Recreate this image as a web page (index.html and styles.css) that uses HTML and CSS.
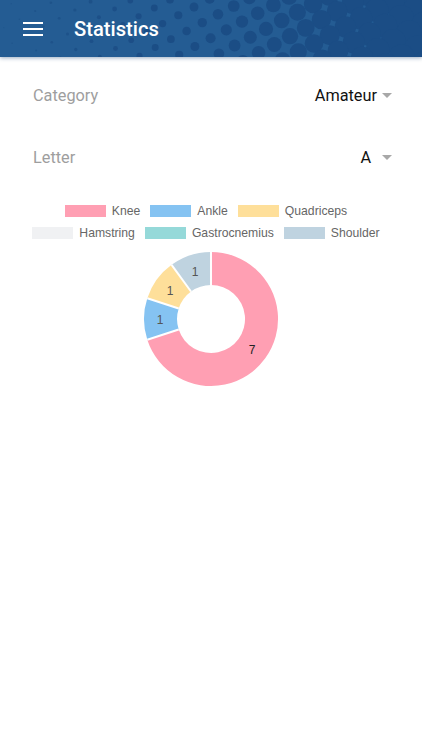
FILE: index.html
```html
<!DOCTYPE html>
<html lang="en">
<head>
	<meta charset="UTF-8">
	<title>Statistics</title>
	<link rel="stylesheet" href="styles.css">
</head>
<body>
	<div class="top">
		<svg class="dots" id="dots" width="422" height="57" viewBox="0 0 422 57"></svg>
		<svg class="menu_icon" width="20" height="14" viewBox="0 0 20 14">
			<rect x="0" y="0" width="20" height="2" fill="#fff"/>
			<rect x="0" y="6" width="20" height="2" fill="#fff"/>
			<rect x="0" y="12" width="20" height="2" fill="#fff"/>
		</svg>
		<p class="title">Statistics</p>
	</div>
	<div class="main">
		<div class="row">
			<p class="label">Category</p>
			<p class="value">Amateur<span class="arrow"></span></p>
		</div>
		<div class="row letter_row">
			<p class="label">Letter</p>
			<p class="value">A<span class="arrow arrow_wide"></span></p>
		</div>
	</div>
	<div class="legend">
		<ul>
			<li><i class="c_knee"></i>Knee</li>
			<li><i class="c_ankle"></i>Ankle</li>
			<li><i class="c_quad"></i>Quadriceps</li>
		</ul>
		<ul>
			<li><i class="c_ham"></i>Hamstring</li>
			<li><i class="c_gas"></i>Gastrocnemius</li>
			<li><i class="c_sho"></i>Shoulder</li>
		</ul>
	</div>
	<svg class="donut" width="136" height="136" viewBox="143 252 136 136">
		<path d="M211 253A67 67 0 1 1 147.3 340.7L178.7 330.5A34 34 0 1 0 211 286Z" fill="#ff9fb3"/>
		<path d="M147.3 340.7A67 67 0 0 1 147.3 299.3L178.7 309.5A34 34 0 0 0 178.7 330.5Z" fill="#85c3f2"/>
		<path d="M147.3 299.3A67 67 0 0 1 171.6 265.8L191 292.5A34 34 0 0 0 178.7 309.5Z" fill="#fedf9a"/>
		<path d="M171.6 265.8A67 67 0 0 1 211 253L211 286A34 34 0 0 0 191 292.5Z" fill="#bfd3e0"/>
		<g class="seams">
			<path d="M211 253V286M147.3 340.7L178.7 330.5M147.3 299.3L178.7 309.5M171.6 265.8L191 292.5"/>
		</g>
		<text x="252" y="355" class="num num_dark">7</text>
		<text x="160" y="325" class="num">1</text>
		<text x="170" y="296" class="num">1</text>
		<text x="195" y="277" class="num">1</text>
	</svg>
	<script src="dots.js"></script>
</body>
</html>
```

FILE: styles.css
```css
html,body{margin: 0; padding: 0; background: #fff;}
body{font-family: Roboto,"Liberation Sans",sans-serif;}
p,ul,li{margin: 0; padding: 0;}

.top{position: relative;display: flex;align-items: center;height: 57px;background: #245c93;box-shadow: 0 1px 4px rgba(30,70,120,.45);overflow: hidden;}
.dots{position: absolute;top: 0;left: 0;filter: blur(.6px);}
.menu_icon{position: relative;margin-left: 23px;}
.title{position: relative;margin-left: 31px;font-size: 20.2px;font-weight: 500;color: #fff;}

.main{padding: 0 30px 0 33px;}
.row{display: flex;justify-content: space-between;align-items: center;height: 24px;margin-top: 26px;}
.letter_row{margin-top: 38px;}
.label{font-size: 16.3px;color: #9e9e9e;}
.value{display: flex;align-items: center;font-size: 16.3px;color: #111;}
.arrow{width: 0;height: 0;margin-left: 5px;border-style: solid;border-width: 5px 5px 0;border-color: #a8a8a8 transparent transparent;}
.arrow_wide{margin-left: 11px;}

.legend{margin-top: 31px;padding-right: 10px;font-family: "Liberation Sans",Arial,sans-serif;font-size: 12.2px;color: #666;}
.legend ul{display: flex;justify-content: center;gap: 10px;height: 22px;}
.legend li{display: flex;align-items: center;list-style: none;gap: 6px;}
.legend i{display: block;width: 41px;height: 12px;}
.c_knee{background: #ff9fb3;}
.c_ankle{background: #85c3f2;}
.c_quad{background: #fedf9a;}
.c_ham{background: #f0f1f3;}
.c_gas{background: #95d9d9;}
.c_sho{background: #bfd3e0;}

.donut{display: block;margin: 7px 0 0 143px;}
.seams path{fill: none;stroke: #fff;stroke-width: 2;}
.num{font-family: "Liberation Sans",Arial,sans-serif;font-size: 12px;fill: #555;text-anchor: middle;}
.num_dark{fill: #222;}
```

FILE: dots.js
```js
var svg = document.getElementById("dots");
var ns = "http://www.w3.org/2000/svg";
var stops = [[0, .5], [100, 2], [200, 4.6], [270, 7.2], [340, 10.5], [422, 13.5]];

function radius(x) {
	if (x <= 0) return stops[0][1];
	for (var k = 1; k < stops.length; k++) {
		if (x <= stops[k][0]) {
			var t = (x - stops[k - 1][0]) / (stops[k][0] - stops[k - 1][0]);
			return stops[k - 1][1] + t * (stops[k][1] - stops[k - 1][1]);
		}
	}
	return stops[stops.length - 1][1];
}

for (var i = -30; i < 30; i++) {
	for (var j = -30; j < 30; j++) {
		var x = 233.7 - 15.7 * i + 24 * j;
		var y = 6 + 8.3 * i + 7.3 * j;
		if (x < -15 || x > 437 || y < -15 || y > 72) continue;
		var c = document.createElementNS(ns, "circle");
		c.setAttribute("cx", x);
		c.setAttribute("cy", y);
		c.setAttribute("r", radius(x));
		c.setAttribute("fill", "#1b4d85");
		c.setAttribute("fill-opacity", Math.min(1, .45 + x / 300));
		svg.appendChild(c);
	}
}
```
